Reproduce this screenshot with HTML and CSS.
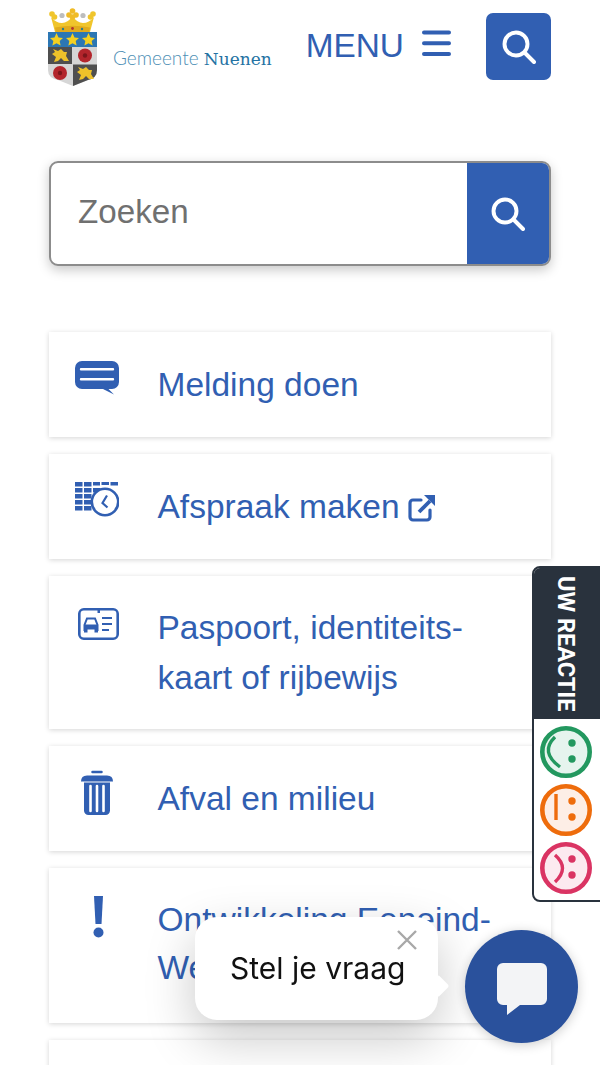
FILE: index.html
```html
<!DOCTYPE html>
<html lang="nl">
<head>
<meta charset="utf-8">
<title>Gemeente Nuenen</title>
<link rel="stylesheet" href="styles.css">
</head>
<body>
<svg class="sprite" width="0" height="0" aria-hidden="true">
  <symbol id="mag" viewBox="0 0 34 34">
    <circle cx="14" cy="14" r="11.500" fill="none" stroke="currentColor" stroke-width="3.900"/>
    <path d="M23 23l9 9" fill="none" stroke="currentColor" stroke-width="4" stroke-linecap="round"/>
  </symbol>
</svg>
<div class="page">
  <header class="header">
    <a class="brand" href="#">
      <svg class="crest" viewBox="0 0 50 80" aria-hidden="true">
        <path d="M3 9Q8 15 14 15Q20 15 24.500 8Q29 15 35 15Q41 15 46 9L42 24H7z" fill="#f0c52c"/>
        <path d="M7 19.500Q24.500 16 42 19.500L41 25H8z" fill="#e0ab1e"/>
        <circle cx="24.500" cy="3" r="2.800" fill="#f0bb26"/><circle cx="21" cy="7" r="2.800" fill="#f0bb26"/><circle cx="28" cy="7" r="2.800" fill="#f0bb26"/>
        <circle cx="24.500" cy="9" r="2.800" fill="#f0bb26"/>
        <circle cx="14" cy="7.500" r="2.600" fill="#bdbdbd"/><circle cx="35" cy="7.500" r="2.600" fill="#bdbdbd"/>
        <circle cx="4" cy="6" r="2.800" fill="#f0c52c"/><circle cx="6.500" cy="9" r="2.800" fill="#f0c52c"/>
        <circle cx="45" cy="6" r="2.800" fill="#f0c52c"/><circle cx="42.500" cy="9" r="2.800" fill="#f0c52c"/>
        <circle cx="24.500" cy="20.500" r="1.400" fill="#b03030"/><circle cx="15" cy="21" r="1.200" fill="#2b7a8c"/><circle cx="34" cy="21" r="1.200" fill="#2b7a8c"/>
        <path d="M0 24h49v38q0 8-9 10l-15 6-15-6Q0 70 0 62z" fill="#d6d6d6"/>
        <rect x="0" y="24" width="49" height="15" fill="#2c77b4"/>
        <path d="M8.500 25l2 4.400 4.500.6-3.300 3.100.9 4.500-4.100-2.300-4.100 2.300.9-4.500L2 30l4.500-.6zM24.500 25l2 4.400 4.500.6-3.300 3.100.9 4.500-4.100-2.300-4.100 2.300.9-4.500L18 30l4.500-.6zM40.500 25l2 4.400 4.500.6-3.300 3.100.9 4.500-4.100-2.300-4.100 2.300.9-4.500L34 30l4.500-.6z" fill="#f4d021"/>
        <rect x="0" y="39" width="24" height="17" fill="#4f4f4f"/>
        <path d="M25 56.500H49V62q0 8-9 10l-15 6z" fill="#4f4f4f"/>
        <path d="M5 41l5 2 3-2 3 3 3 0-1 4 3 5h-5l-3-3-3 3-4 1 2-5-4-3 3-2z" fill="#eec22a"/>
        <path d="M30 59l5 2 3-2 3 3 3 0-1 4 3 5h-5l-3-3-3 3-4 1 2-5-4-3 3-2z" fill="#eec22a"/>
        <circle cx="37" cy="47.500" r="7" fill="#b3252c"/><circle cx="37" cy="47.500" r="2.200" fill="#7c161b"/>
        <circle cx="12" cy="65" r="7" fill="#b3252c"/><circle cx="12" cy="65" r="2.200" fill="#7c161b"/>
      </svg>
      <span class="brand-name"><span class="brand-light">Gemeente</span> <span class="brand-bold">Nuenen</span></span>
    </a>
    <a class="menu" href="#">
      <span>MENU</span>
      <svg viewBox="0 0 29 27" width="29" height="27" aria-hidden="true"><path d="M2 2.500h25M2 13.200h25M2 24h25" stroke="currentColor" stroke-width="4" stroke-linecap="round"/></svg>
    </a>
    <button class="search-toggle" type="button" aria-label="Zoeken"><svg width="34" height="34"><use href="#mag"/></svg></button>
  </header>

  <form class="search">
    <span class="search-input">Zoeken</span>
    <button class="search-btn" type="button" aria-label="Zoeken"><svg width="34" height="34"><use href="#mag"/></svg></button>
  </form>

  <ul class="cards">
    <li class="card">
      <svg class="ico ico-msg" viewBox="0 0 44 34" aria-hidden="true"><path d="M7 0h30a7 7 0 0 1 7 7v14a7 7 0 0 1-7 7h-3.500l5.500 5.500L28 28H7a7 7 0 0 1-7-7V7a7 7 0 0 1 7-7z" fill="#315fb2"/><path d="M6 8.300h32M6 18.300h32" stroke="#fff" stroke-width="2.400" stroke-linecap="round"/></svg>
      <a href="#">Melding doen</a>
    </li>
    <li class="card">
      <svg class="ico" viewBox="0 0 44 35" aria-hidden="true"><path fill="#315fb2" d="M0 0h7.500v4.500H0zM9 0h7.500v4.500H9zM18 0h7v3.500h-7zM26.500 0h7.500v3h-7.500zM35.500 0h7.500v3.500h-7.500zM0 6h7.500v4.500H0zM9 6h7.500v4.500H9zM18 6h7.500v4.500H18zM0 12h7.500v4.500H0zM9 12h7.500v4.500H9zM0 18h7.500v4.500H0zM9 18h7.500v4.500H9zM0 24h7.500v4.500H0zM9 24h7.500v4.500H9z"/><circle cx="30" cy="20" r="13.200" fill="#fff" stroke="#315fb2" stroke-width="2.600"/><path d="M32 13.500l-4.500 7.500 5 4.500" fill="none" stroke="#315fb2" stroke-width="2.200"/></svg>
      <a href="#">Afspraak maken<svg class="ext" viewBox="0 0 28 28" aria-hidden="true"><path d="M13 6H5a3 3 0 0 0-3 3v14a3 3 0 0 0 3 3h14a3 3 0 0 0 3-3v-7" fill="none" stroke="currentColor" stroke-width="3.200" stroke-linecap="round"/><path d="M11 18L22 7" stroke="currentColor" stroke-width="3.800"/><path d="M16 1h11v11z" fill="currentColor"/></svg></a>
    </li>
    <li class="card card-tight">
      <svg class="ico ico-id" viewBox="0 0 44 34" aria-hidden="true"><rect x="4.300" y="1.300" width="38.400" height="29.400" rx="4.500" fill="none" stroke="#315fb2" stroke-width="2.600"/><path d="M22.500 1h2.500v4h-2.500z" fill="#315fb2"/><path d="M9.500 23v-6l2.500-6.500h8l2.500 6.500v6" fill="none" stroke="#315fb2" stroke-width="2"/><path d="M9 16.500h14v5H9zM9 21h3.500v3.500H9zM19.500 21H23v3.500h-3.500z" fill="#315fb2"/><path d="M27 10h10M27 16h10M27 22h7" stroke="#315fb2" stroke-width="2"/></svg>
      <a href="#">Paspoort, identiteits-<br>kaart of rijbewijs</a>
    </li>
    <li class="card">
      <svg class="ico ico-bin" viewBox="0 0 44 46" aria-hidden="true"><path d="M17.500 2h9" stroke="#315fb2" stroke-width="2.500" stroke-linecap="round"/><path d="M6 11.500q0-6 6-6h20q6 0 6 6z" fill="#315fb2"/><path d="M9 12.500h26v28a4.500 4.500 0 0 1-4.500 4.500h-17A4.500 4.500 0 0 1 9 40.500z" fill="#315fb2"/><path d="M15.500 16v25M22 16v25M28.500 16v25" stroke="#fff" stroke-width="2.600" stroke-linecap="round"/></svg>
      <a href="#">Afval en milieu</a>
    </li>
    <li class="card card-wide">
      <svg class="ico" viewBox="0 0 44 42" aria-hidden="true"><path d="M19 0h9l-1.500 28h-6z" fill="#315fb2"/><circle cx="23.500" cy="36.500" r="5" fill="#315fb2"/></svg>
      <a href="#">Ontwikkeling Eeneind-<br>West</a>
    </li>
    <li class="card card-stub"></li>
  </ul>
</div>

<aside class="feedback">
  <div class="feedback-title"><span>UW REACTIE</span></div>
  <div class="faces">
    <svg viewBox="0 0 52 52" width="52" height="52" aria-hidden="true"><circle cx="26" cy="26" r="23.700" fill="#e6f4ee" stroke="#23985f" stroke-width="4.600"/><path d="M15 11Q-.5 26 20 41" fill="none" stroke="#23985f" stroke-width="3.400"/><circle cx="32" cy="17" r="3.700" fill="#23985f"/><circle cx="32" cy="33" r="3.700" fill="#23985f"/></svg>
    <svg viewBox="0 0 52 52" width="52" height="52" aria-hidden="true"><circle cx="26" cy="26" r="23.700" fill="#fdeee6" stroke="#ee6c0c" stroke-width="4.600"/><path d="M16 10v26" stroke="#ee6c0c" stroke-width="3.400"/><circle cx="32" cy="17" r="3.700" fill="#ee6c0c"/><circle cx="32" cy="33" r="3.700" fill="#ee6c0c"/></svg>
    <svg viewBox="0 0 52 52" width="52" height="52" aria-hidden="true"><circle cx="26" cy="26" r="23.700" fill="#fceaf0" stroke="#da3463" stroke-width="4.600"/><path d="M15 13Q30 26 15 40" fill="none" stroke="#da3463" stroke-width="3.400"/><circle cx="32" cy="17" r="3.700" fill="#da3463"/><circle cx="32" cy="33" r="3.700" fill="#da3463"/></svg>
  </div>
</aside>

<div class="chat-bubble">
  <svg class="chat-close" viewBox="0 0 22 22" width="22" height="22" aria-hidden="true"><path d="M2 2l18 18M20 2L2 20" stroke="#a8a8a8" stroke-width="2.400"/></svg>
  <span>Stel je vraag</span>
</div>
<button class="chat-btn" type="button" aria-label="Chat"><svg viewBox="0 0 50 52" width="50" height="52" aria-hidden="true"><path d="M6 0h38a6 6 0 0 1 6 6v30a6 6 0 0 1-6 6H23L10 52V42H6a6 6 0 0 1-6-6V6a6 6 0 0 1 6-6z" fill="#f3f4f6"/></svg></button>
</body>
</html>
```

FILE: styles.css
```css
* { box-sizing: border-box; }
html, body { margin: 0; padding: 0; height: 1065px; overflow: hidden; background: #fff; }
body { font-family: "Liberation Sans", Arial, sans-serif; color: #315fb2; }
a { color: inherit; text-decoration: none; }
button { border: 0; padding: 0; font: inherit; color: #fff; }
.sprite { position: absolute; }
.page { padding: 0 49px; }

.header { display: flex; align-items: flex-start; height: 161px; }
.brand { display: flex; align-items: flex-start; margin: 8px 0 0 -1px; }
.crest { display: block; width: 50px; height: 80px; flex: none; }
.brand-name { margin: 40px 0 0 15px; font-size: 19px; line-height: 20px; white-space: nowrap; }
.brand-light { font-family: Lato, sans-serif; font-weight: 300; color: #4f8fb5; }
.brand-bold { font-family: "DejaVu Serif", serif; font-size: 17px; color: #2472a3; }
.menu { display: flex; align-items: center; gap: 18px; margin: 27px 0 0 auto; font-size: 33.400px; line-height: 38px; }
.menu svg { margin-bottom: 6px; }
.search-toggle { display: flex; align-items: center; justify-content: center; flex: none; width: 65px; height: 67px; margin: 13px 0 0 35px; border-radius: 7px; background: #315fb2; }

.search { display: flex; height: 105px; border: 2px solid #8c8c8c; border-radius: 9px; overflow: hidden; background: #fff; box-shadow: 0 4px 12px rgba(0,0,0,.22); }
.search-input { flex: 1; padding: 0 0 0 27px; font-size: 33.200px; line-height: 97px; color: #707070; }
.search-btn { display: flex; align-items: center; justify-content: center; width: 82px; background: #315fb2; }

.cards { list-style: none; margin: 66px 0 0; padding: 0; display: flex; flex-direction: column; gap: 17px; }
.card { display: flex; align-items: flex-start; padding: 27.500px 16px 27.500px 26px; background: #fff; font-size: 33.500px; line-height: 50px; box-shadow: 0 1px 5px rgba(0,0,0,.17); }
.card a { margin-left: -0.500px; }
.card-tight { padding-top: 26.500px; padding-bottom: 26.500px; }
.card-wide { padding-top: 28px; padding-bottom: 31px; line-height: 48px; }
.card-stub { height: 60px; }
.ico { display: block; flex: none; width: 44px; height: auto; margin-right: 39px; }
.ico-msg { margin-top: 1.500px; }
.ico-id { margin-top: 5px; }
.ico-bin { margin-top: -3.500px; }
.ext { display: inline-block; width: 28px; height: 28px; margin-left: 8px; vertical-align: -4px; }

.feedback { position: fixed; left: 532px; top: 566px; width: 80px; height: 336px; border: 2px solid #29323d; border-radius: 8px; background: #fff; overflow: hidden; }
.feedback-title { height: 151px; background: #29323d; color: #fff; display: flex; align-items: center; }
.feedback-title span { writing-mode: vertical-rl; font-family: Roboto, sans-serif; font-weight: 700; font-size: 23.500px; margin-left: 18px; white-space: nowrap; }
.faces { display: flex; flex-direction: column; gap: 6px; padding: 7px 0 0 6px; }
.faces svg { display: block; }

.chat-bubble { position: fixed; left: 195px; top: 917px; width: 243px; height: 103px; padding: 31px 0 0 35px; background: #fff; border-radius: 22px; font-family: Inter, sans-serif; font-size: 30px; line-height: 40px; color: #111; box-shadow: 0 18px 50px rgba(0,0,0,.22); white-space: nowrap; }
.chat-bubble::after { content: ""; position: absolute; right: -8px; top: 61px; width: 16px; height: 16px; background: #fff; transform: rotate(45deg); border-radius: 2px; }
.chat-close { position: absolute; left: 201px; top: 12px; }
.chat-btn { position: fixed; left: 465px; top: 930px; width: 113px; height: 113px; border-radius: 50%; background: #2a519c; display: flex; align-items: center; justify-content: center; box-shadow: 0 2px 12px rgba(0,0,0,.2); }
.chat-btn svg { display: block; margin-top: 5px; }
```
